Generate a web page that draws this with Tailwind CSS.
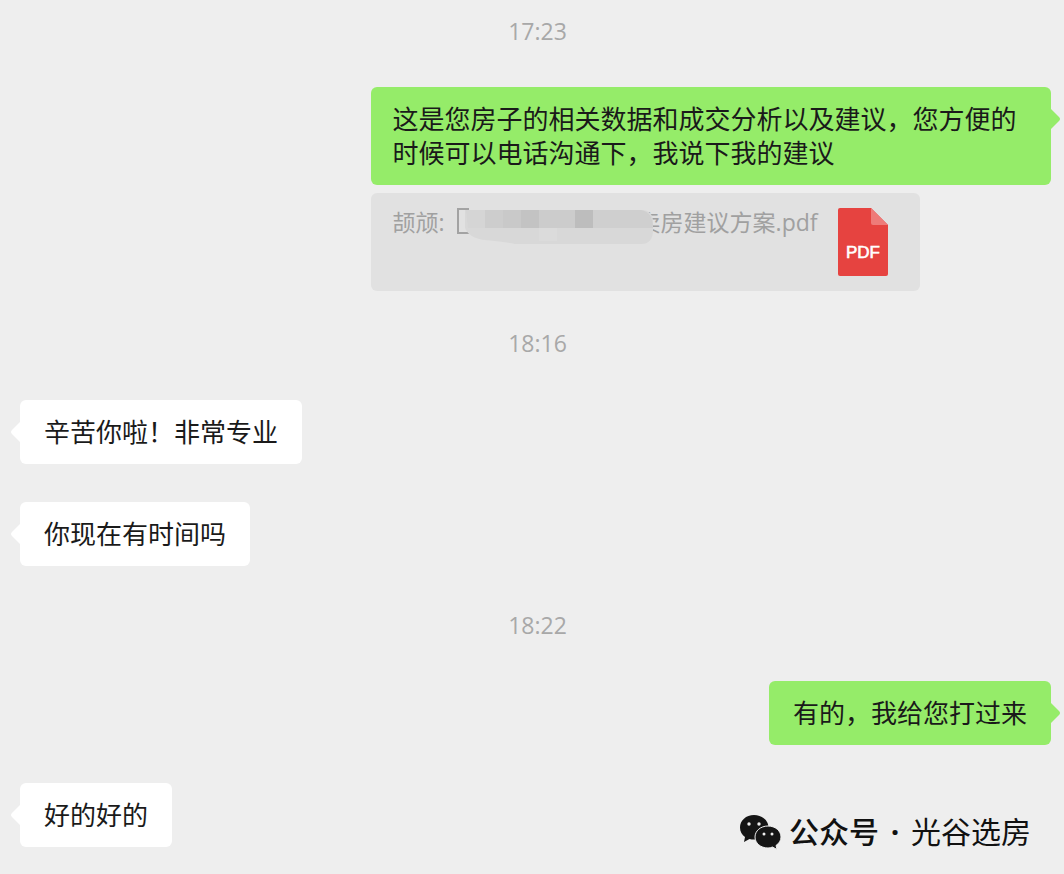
<!DOCTYPE html>
<html lang="zh-CN">
  <head>
    <meta charset="UTF-8" />
    <meta name="viewport" content="width=device-width, initial-scale=1.0" />
    <title>聊天记录</title>
    <script src="https://cdn.jsdelivr.net/npm/@tailwindcss/browser@4"></script>
  </head>
  <body class="relative min-h-screen bg-[#eeeeee] font-['Open_Sans','Noto_Sans_CJK_SC',sans-serif] text-[26px] leading-[34px] text-[#1a1a1a]">
    <main class="flex flex-col pt-[19px] pb-[26px] pl-5 pr-[13px]">
      <time class="pl-1 text-center text-[23px] leading-6 text-[#a8a8a8]">17:23</time>

      <div class="mt-11 flex w-[66%] flex-col items-start self-end">
        <p class="relative w-full rounded-md bg-[#95ec69] py-[15px] pl-[22px] pr-5">
          这是您房子的相关数据和成交分析以及建议，您方便的<br />时候可以电话沟通下，我说下我的建议
          <svg class="absolute left-full top-[22px] h-5 w-[10px]" viewBox="0 0 10 20" fill="#95ec69"><path d="M0 0 L8 8 Q10 10 8 12 L0 20Z" /></svg>
        </p>

        <!-- quoted file -->
        <a href="#" class="mt-2 flex items-start rounded-md bg-[#e1e1e1] py-[15px] pl-[22px] pr-8 text-[23px] leading-7 text-[#a0a0a0]">
          <span>颉颃:</span>
          <span class="relative ml-2 h-9 w-[185px]">
            <svg class="absolute left-0 top-0 h-9 w-[200px]" viewBox="0 0 200 36">
              <path d="M16 1H5V25H16" fill="none" stroke="#a3a3a3" stroke-width="2" />
            </svg>
          </span>
          <span class="relative">卖房建议方案.pdf
            <svg class="absolute -left-[173px] top-0 h-[38px] w-[190px]" viewBox="0 0 190 38">
              <path d="M0 2H176Q188 2 188 14V22Q188 36 176 36H50Q40 34 20 32Q4 30 0 20Z" fill="#d8d8d8" />
              <path d="M1 2H20V20H3Z" fill="#d5d5d5" />
              <rect x="20" y="2" width="18" height="18" fill="#cdcdcd" />
              <rect x="38" y="2" width="18" height="18" fill="#c9c9c9" />
              <rect x="56" y="2" width="18" height="18" fill="#c3c3c3" />
              <rect x="74" y="2" width="36" height="18" fill="#cccccc" />
              <rect x="110" y="2" width="18" height="18" fill="#bdbdbd" />
              <path d="M128 2H176Q188 4 188 20H128Z" fill="#cfcfcf" />
              <rect x="74" y="20" width="18" height="13" fill="#dbdbdb" />
            </svg>
          </span>
          <svg class="ml-5 h-[68px] w-[50px]" viewBox="0 0 50 68">
            <path d="M2 0H33L50 17V66Q50 68 48 68H2Q0 68 0 66V2Q0 0 2 0Z" fill="#e64340" />
            <path d="M33 0L50 17H35Q33 17 33 15Z" fill="#ee7b79" />
            <text x="25" y="50" text-anchor="middle" font-family="Liberation Sans" font-size="17" fill="#fff" stroke="#fff" stroke-width="0.6">PDF</text>
          </svg>
        </a>
      </div>

      <time class="mt-10 pl-1 text-center text-[23px] leading-6 text-[#a8a8a8]">18:16</time>

      <p class="relative mt-[45px] self-start rounded-md bg-white px-6 py-[15px]">
        辛苦你啦！非常专业
        <svg class="absolute right-full top-[22px] h-5 w-[10px]" viewBox="0 0 10 20" fill="#fff"><path d="M10 0 L2 8 Q0 10 2 12 L10 20Z" /></svg>
      </p>
      <p class="relative mt-[38px] self-start rounded-md bg-white px-6 py-[15px]">
        你现在有时间吗
        <svg class="absolute right-full top-[22px] h-5 w-[10px]" viewBox="0 0 10 20" fill="#fff"><path d="M10 0 L2 8 Q0 10 2 12 L10 20Z" /></svg>
      </p>

      <time class="mt-[47px] pl-1 text-center text-[23px] leading-6 text-[#a8a8a8]">18:22</time>

      <p class="relative mt-11 self-end rounded-md bg-[#95ec69] px-6 py-[15px]">
        有的，我给您打过来
        <svg class="absolute left-full top-[22px] h-5 w-[10px]" viewBox="0 0 10 20" fill="#95ec69"><path d="M0 0 L8 8 Q10 10 8 12 L0 20Z" /></svg>
      </p>
      <p class="relative mt-[38px] self-start rounded-md bg-white px-6 py-[15px]">
        好的好的
        <svg class="absolute right-full top-[22px] h-5 w-[10px]" viewBox="0 0 10 20" fill="#fff"><path d="M10 0 L2 8 Q0 10 2 12 L10 20Z" /></svg>
      </p>
    </main>

    <!-- account watermark -->
    <div class="absolute right-[33px] bottom-6 flex items-center text-[30px] leading-9 text-[#111111]">
      <svg class="mr-2 h-9 w-[42px]" viewBox="0 0 42 36">
        <path d="M15 1C7 1 1 6.500 1 13.500C1 17.500 3 21 6 23L5 28L10.500 25C12 25.500 13.500 25.500 15 25.500C23 25.500 29.500 20 29.500 13.500C29.500 6.500 23 1 15 1Z" fill="#151515" />
        <path d="M29 12C21.500 12 16 17 16 23C16 29 21.500 34 29 34C30.500 34 32 33.700 33.500 33L38 35.500L37 31.500C40 29.500 42 26.500 42 23C42 17 36.500 12 29 12Z" fill="#151515" stroke="#eeeeee" stroke-width="1" />
        <circle cx="10" cy="10" r="1.700" fill="#eeeeee" />
        <circle cx="20" cy="10" r="1.700" fill="#eeeeee" />
        <circle cx="25" cy="20" r="1.500" fill="#eeeeee" />
        <circle cx="33" cy="20" r="1.500" fill="#eeeeee" />
      </svg>
      <span class="font-medium">公众号</span>
      <span class="w-8 text-center font-bold">·</span>
      <span>光谷选房</span>
    </div>
  </body>
</html>
